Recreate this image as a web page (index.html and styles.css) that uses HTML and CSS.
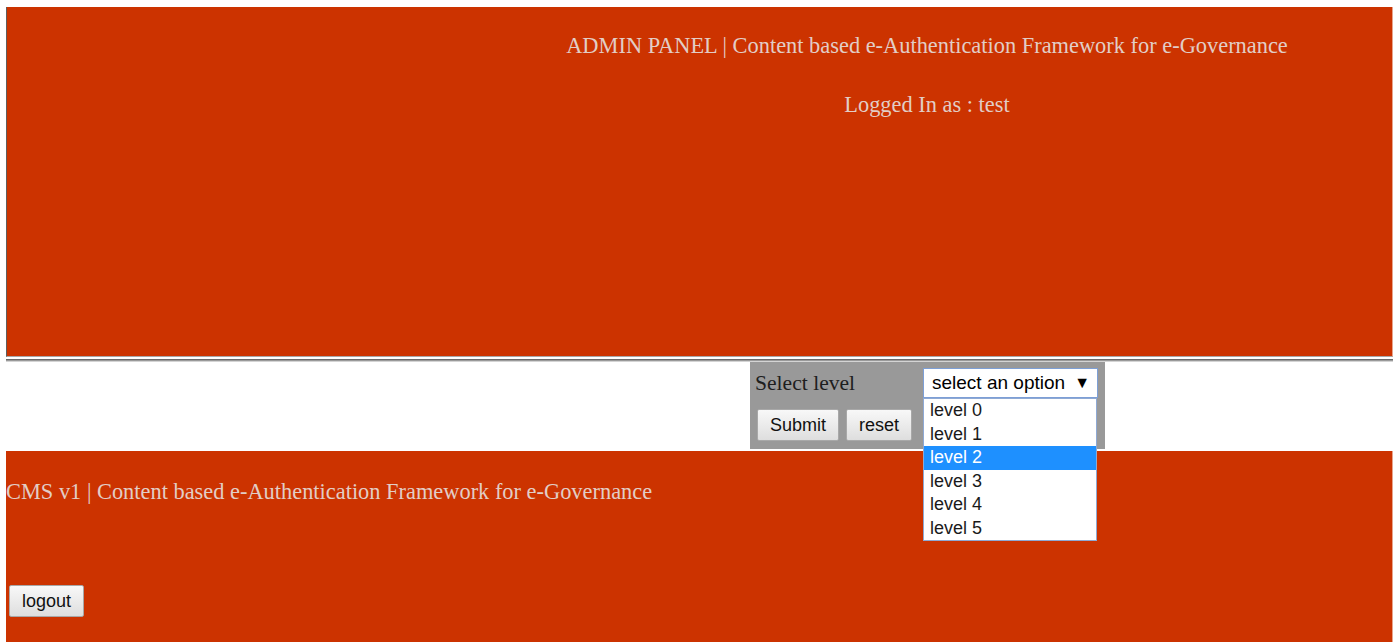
FILE: index.html
```html
<!DOCTYPE html>
<html lang="en">
<head>
<meta charset="utf-8">
<title>ADMIN PANEL | Content based e-Authentication Framework for e-Governance</title>
<link rel="stylesheet" href="styles.css">
</head>
<body>
  <div class="header">
    <div class="side"></div>
    <div class="header-main">
      <p class="title">ADMIN PANEL | Content based e-Authentication Framework for e-Governance</p>
      <p class="user">Logged In as : test</p>
    </div>
  </div>
  <hr class="rule">
  <div class="content">
    <div class="side"></div>
    <div class="content-main">
      <form class="level-form">
        <label class="level-label" for="level">Select level</label>
        <div class="select-wrap">
          <div class="select" id="level">
            <span>select an option</span>
            <span class="arrow">&#9660;</span>
          </div>
          <ul class="options">
            <li>level 0</li>
            <li>level 1</li>
            <li class="active">level 2</li>
            <li>level 3</li>
            <li>level 4</li>
            <li>level 5</li>
          </ul>
        </div>
        <div class="actions">
          <button type="button" class="btn">Submit</button>
          <button type="button" class="btn">reset</button>
        </div>
      </form>
    </div>
  </div>
  <div class="footer">
    <p class="footer-title">CMS v1 | Content based e-Authentication Framework for e-Governance</p>
    <button type="button" class="btn logout">logout</button>
  </div>
</body>
</html>
```
FILE: styles.css
```css
body {
  margin: 7px 3px 0 6px;
  font-family: "Liberation Serif", "Times New Roman", serif;
  background: #ffffff;
}

.side {
  width: 456px;
  flex: none;
}

/* top banner */
.header {
  display: flex;
  height: 349px;
  background: #cc3300;
  border-left: 1px solid #5e5e5e;
  border-bottom: 1px solid #a9a9a9;
  border-right: 1px solid #e8a48c;
}

.header .side {
  width: 455px;
}

.header-main {
  flex: 1;
  text-align: center;
  color: #e2cdc6;
  font-size: 22.4px;
  padding-top: 26px;
}

.title,
.user {
  margin: 0;
  line-height: 25px;
}

.user {
  margin-top: 34px;
}

.rule {
  margin: 2px 0 0;
  height: 1px;
  border: 0;
  border-top: 1px solid #6a6a6a;
  border-bottom: 1px solid #d4d4d4;
  background: #9a9a9a;
}

/* level selection */
.content {
  display: flex;
}

.content-main {
  flex: 1;
  display: flex;
  justify-content: center;
}

.level-form {
  width: 355px;
  height: 87px;
  box-sizing: border-box;
  margin: 0 0 2px;
  padding: 6px 7px 8px 5px;
  background: #999999;
  display: grid;
  grid-template-columns: 168px 175px;
  grid-template-rows: 30px 32px;
  row-gap: 11px;
  align-items: center;
}

.level-label {
  font-size: 21.6px;
  line-height: 23px;
  color: #1e1e1e;
}

.select-wrap {
  position: relative;
  height: 30px;
}

.select {
  height: 30px;
  box-sizing: border-box;
  border: 1px solid #7d9fd6;
  background: #ffffff;
  display: flex;
  align-items: center;
  justify-content: space-between;
  padding: 0 7px 0 8px;
  font-family: "Liberation Sans", Arial, sans-serif;
  font-size: 19px;
  color: #000000;
}

.arrow {
  font-size: 16px;
}

.options {
  position: absolute;
  top: 30px;
  left: 0;
  width: 174px;
  box-sizing: border-box;
  margin: 0;
  padding: 0;
  list-style: none;
  background: #ffffff;
  border: 1px solid #8ea9d4;
  z-index: 2;
}

.options li {
  height: 23.5px;
  line-height: 23.5px;
  padding-left: 6px;
  font-family: "Liberation Sans", Arial, sans-serif;
  font-size: 18px;
  color: #1a1a1a;
}

.options li.active {
  background: #1e90ff;
  color: #ffffff;
}

.actions {
  grid-column: 1 / 3;
  display: flex;
  gap: 7px;
  padding-left: 2px;
}

.btn {
  height: 32px;
  box-sizing: border-box;
  padding: 0 12px;
  border: 1px solid #a8a8a8;
  border-radius: 2px;
  background: linear-gradient(#f8f8f8, #dedede);
  font-family: "Liberation Sans", Arial, sans-serif;
  font-size: 18px;
  color: #111111;
}

/* bottom banner */
.footer {
  min-height: 163px;
  background: #cc3300;
  border-right: 1px solid #e8a48c;
  padding-top: 28px;
}

.footer-title {
  margin: 0 0 81px;
  font-size: 22.4px;
  line-height: 25px;
  color: #e2cdc6;
}

.logout {
  margin-left: 3px;
}
```
